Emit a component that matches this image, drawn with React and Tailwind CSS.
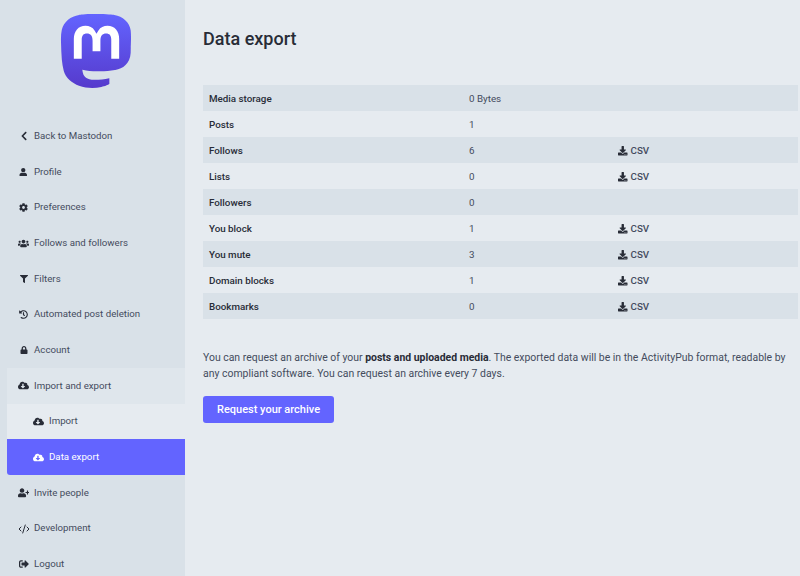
import React from "react";
import { CodeXml } from "lucide-react";
import {
  FaChevronLeft,
  FaUser,
  FaCog,
  FaUsers,
  FaFilter,
  FaHistory,
  FaLock,
  FaCloudDownloadAlt,
  FaUserPlus,
  FaSignOutAlt,
  FaDownload,
} from "react-icons/fa";

const rows = [
  { label: "Media storage", value: "0 Bytes" },
  { label: "Posts", value: "1" },
  { label: "Follows", value: "6", csv: true },
  { label: "Lists", value: "0", csv: true },
  { label: "Followers", value: "0" },
  { label: "You block", value: "1", csv: true },
  { label: "You mute", value: "3", csv: true },
  { label: "Domain blocks", value: "1", csv: true },
  { label: "Bookmarks", value: "0", csv: true },
];

function Logo() {
  return (
    <svg viewBox="0 0 75 79" className="w-[74px] h-[78px]">
      <defs>
        <linearGradient id="masto" x1="0" y1="0" x2="0" y2="1">
          <stop offset="0" stopColor="#6364ff" />
          <stop offset="1" stopColor="#563acc" />
        </linearGradient>
      </defs>
      <rect x="14" y="10" width="52" height="38" fill="#fff" />
      <path
        fill="url(#masto)"
        d="M74.7135 16.6043C73.6199 8.54587 66.5351 2.19527 58.1366 0.964691C56.7196 0.756754 51.351 0 38.9148 0H38.822C26.3824 0 23.7135 0.756754 22.2966 0.964691C14.1319 2.16118 6.67571 7.86752 4.86669 16.0214C3.99657 20.0369 3.90371 24.4888 4.06535 28.5726C4.29578 34.4289 4.34049 40.275 4.877 46.1075C5.24791 49.9817 5.89495 53.8251 6.81328 57.6088C8.53288 64.5968 15.4938 70.4122 22.3138 72.7848C29.6155 75.259 37.468 75.6697 44.9919 73.971C45.8196 73.7801 46.6381 73.5586 47.4475 73.3063C49.2737 72.7302 51.4164 72.086 52.9915 70.9542C53.0131 70.9384 53.0308 70.9178 53.0433 70.8942C53.0558 70.8706 53.0628 70.8445 53.0637 70.8179V65.1661C53.0634 65.1412 53.0574 65.1167 53.0462 65.0944C53.035 65.0721 53.0189 65.0525 52.9992 65.0371C52.9794 65.0218 52.9564 65.011 52.9318 65.0056C52.9073 65.0002 52.8819 65.0003 52.8574 65.0059C48.0369 66.1472 43.0971 66.7193 38.141 66.7103C29.6118 66.7103 27.3178 62.6981 26.6609 61.0278C26.1329 59.5842 25.7976 58.0784 25.6636 56.5486C25.6622 56.5229 25.667 56.4973 25.6775 56.4738C25.688 56.4502 25.7039 56.4295 25.724 56.4132C25.7441 56.397 25.7678 56.3856 25.7931 56.3801C25.8185 56.3746 25.8448 56.3751 25.8699 56.3816C30.6101 57.5151 35.4693 58.0873 40.3455 58.086C41.5183 58.086 42.6876 58.086 43.8604 58.0553C48.7647 57.919 53.9339 57.6701 58.7591 56.7361C58.8794 56.7123 58.9998 56.6918 59.103 56.6611C66.7139 55.2124 73.9569 50.665 74.6929 39.1501C74.7204 38.6967 74.7892 34.4016 74.7892 33.9312C74.7926 32.3325 75.3085 22.5901 74.7135 16.6043ZM62.9996 45.3371H54.9966V25.9069C54.9966 21.8163 53.277 19.7302 49.7793 19.7302C45.9343 19.7302 44.0083 22.1981 44.0083 27.0727V37.7082H36.0534V27.0727C36.0534 22.1981 34.124 19.7302 30.279 19.7302C26.8019 19.7302 25.0651 21.8163 25.0617 25.9069V45.3371H17.0656V25.3172C17.0656 21.2266 18.1191 17.9769 20.2262 15.568C22.4003 13.1648 25.2509 11.9308 28.7898 11.9308C32.8859 11.9308 35.9812 13.492 38.0447 16.6111L40.036 19.9245L42.0308 16.6111C44.0943 13.492 47.1896 11.9308 51.2788 11.9308C54.8143 11.9308 57.6649 13.1648 59.8459 15.568C61.9529 17.9746 63.0065 21.2243 63.0065 25.3172L62.9996 45.3371Z"
      />
    </svg>
  );
}

function NavItem({ icon: Icon, size, children }) {
  return (
    <div className="h-[35.67px] ml-[7px] pl-[9px] flex items-center text-[#444b5d]">
      <span className="w-[15px] mr-[3px] flex justify-center text-[#282c37] shrink-0">
        <Icon className={size} />
      </span>
      <span>{children}</span>
    </div>
  );
}

function App() {
  return (
    <div className="w-[800px] h-[576px] overflow-hidden flex bg-[#e6ebf0] font-['Roboto',sans-serif]">
      <div className="w-[185px] shrink-0 bg-[#d9e1e8] text-[9.7px]">
        <div className="h-[118.5px] pt-[14px] pl-[57px]">
          <Logo />
        </div>
        <NavItem icon={FaChevronLeft} size="text-[10px]">Back to Mastodon</NavItem>
        <NavItem icon={FaUser} size="text-[8.5px]">Profile</NavItem>
        <NavItem icon={FaCog} size="text-[9px]">Preferences</NavItem>
        <NavItem icon={FaUsers} size="text-[11px]">Follows and followers</NavItem>
        <NavItem icon={FaFilter} size="text-[8px]">Filters</NavItem>
        <NavItem icon={FaHistory} size="text-[9px]">Automated post deletion</NavItem>
        <NavItem icon={FaLock} size="text-[8px]">Account</NavItem>
        <div className="ml-[7px] bg-[#dfe6ec] rounded-b-[3px]">
          <div className="h-[35.67px] pl-[9px] flex items-center text-[#444b5d]">
            <span className="w-[15px] mr-[3px] flex justify-center text-[#282c37] text-[11px] shrink-0">
              <FaCloudDownloadAlt />
            </span>
            <span>Import and export</span>
          </div>
          <div className="h-[35.67px] pl-[24px] flex items-center bg-[#e6ebf0] text-[#444b5d]">
            <span className="w-[15px] mr-[3px] flex justify-center text-[#282c37] text-[11px] shrink-0">
              <FaCloudDownloadAlt />
            </span>
            <span>Import</span>
          </div>
          <div className="h-[35.67px] pl-[24px] flex items-center bg-[#6364ff] text-white rounded-bl-[3px]">
            <span className="w-[15px] mr-[3px] flex justify-center text-[11px] shrink-0">
              <FaCloudDownloadAlt />
            </span>
            <span>Data export</span>
          </div>
        </div>
        <NavItem icon={FaUserPlus} size="text-[11.5px]">Invite people</NavItem>
        <div className="h-[35.67px] ml-[7px] pl-[9px] flex items-center text-[#444b5d]">
          <span className="w-[15px] mr-[3px] flex justify-center text-[#282c37] shrink-0">
            <CodeXml size={12} strokeWidth={2} />
          </span>
          <span>Development</span>
        </div>
        <NavItem icon={FaSignOutAlt} size="text-[10px]">Logout</NavItem>
      </div>

      <div className="flex-1 pl-[18px] pr-[2px] text-[#282c37]">
        <h1 className="h-[85px] pt-[28px] text-[18px] leading-[22px] font-medium">
          Data export
        </h1>
        <table className="w-full table-fixed border-collapse text-[9.8px]">
          <colgroup>
            <col className="w-[260px]" />
            <col className="w-[149px]" />
            <col />
          </colgroup>
          <tbody>
            {rows.map((row, i) => (
              <tr
                key={row.label}
                className={`h-[26px] ${i % 2 === 0 ? "bg-[#d9e1e8]" : ""}`}
              >
                <td className="pl-[6px] pr-0 pb-0 pt-[2px] font-medium text-[#282c37]">
                  {row.label}
                </td>
                <td className="pl-[6px] pr-0 pb-0 pt-[2px] text-[#444b5d]">{row.value}</td>
                <td className="pl-[6px] pr-0 pb-0 pt-[2px]">
                  {row.csv && (
                    <span className="flex items-center gap-[3px] font-medium text-[#444b5d]">
                      <FaDownload className="text-[#282c37] text-[9.5px]" />
                      CSV
                    </span>
                  )}
                </td>
              </tr>
            ))}
          </tbody>
        </table>
        <p className="mt-[31px] text-[10.45px] leading-[16px] text-[#444b5d]">
          You can request an archive of your{" "}
          <strong className="font-bold text-[#282c37]">
            posts and uploaded media
          </strong>
          . The exported data will be in the ActivityPub format, readable by any
          compliant software. You can request an archive every 7 days.
        </p>
        <button className="mt-[14px] pt-px block w-[131px] h-[27px] rounded-[3px] bg-[#6364ff] text-white text-[11px] font-medium">
          Request your archive
        </button>
      </div>
    </div>
  );
}

export default App;
